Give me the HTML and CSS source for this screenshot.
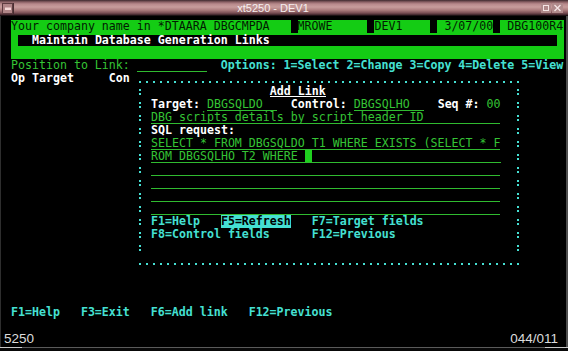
FILE: index.html
```html
<!DOCTYPE html>
<html>
<head>
<meta charset="utf-8">
<title>xt5250 - DEV1</title>
<link rel="stylesheet" href="styles.css">
</head>
<body>
<div class="win">
  <div class="titlebar">
    <svg class="tb-menu" width="12" height="11" viewBox="0 0 12 11"><rect x="0.5" y="0.5" width="10" height="10" fill="#b08587" stroke="#5e3c40"/><rect x="3" y="4.5" width="6" height="2.5" fill="#f4d8d6"/><rect x="11" y="0" width="1" height="11" fill="#4a2e32"/></svg>
    <span class="tb-title">xt5250 - DEV1</span>
    <svg class="tb-max" width="10" height="10" viewBox="0 0 10 10"><rect x="0" y="0" width="10" height="10" fill="#b08a8b"/><rect x="2.5" y="2.5" width="5" height="5" fill="none" stroke="#f4e4e4"/></svg>
    <svg class="tb-close" width="11" height="10" viewBox="0 0 11 10"><rect x="0" y="0" width="11" height="10" fill="#b08a8b"/><path d="M2.5 2 L8.5 8 M8.5 2 L2.5 8" stroke="#f4e4e4" stroke-width="1.3"/></svg>
  </div>
  <div class="body">
    <div class="screen">
      <div class="hdr">
        <div class="hrow"><span class="rvt">Your company name in *DTAARA DBGCMPDA   </span><span class="gap"></span><span class="rvt">MROWE     </span><span class="gap"></span><span class="rvt">DEV1    </span><span class="gap"></span><span class="rvt"> 3/07/00</span><span class="gap"></span><span class="rvt"> DBG100R4</span></div>
        <div class="hbar"><span class="w">  Maintain Database Generation Links</span></div>
        <div class="hrow"></div>
      </div>
      <div class="row"> <span class="g">Position to Link:</span> <span class="fld g">          </span>  <span class="c">Options: 1=Select 2=Change 3=Copy 4=Delete 5=View</span></div>
      <div class="row"> <span class="w">Op Target</span>     <span class="w">Con</span></div>
      <div class="row"></div>
      <div class="row"></div>
      <div class="row"></div>
      <div class="row"></div>
      <div class="row"></div>
      <div class="row"></div>
      <div class="row"></div>
      <div class="row"></div>
      <div class="row"></div>
      <div class="row"></div>
      <div class="row"></div>
      <div class="row"></div>
      <div class="row"></div>
      <div class="row"></div>
      <div class="row"></div>
      <div class="row"></div>
      <div class="row"></div>
      <div class="row"> <span class="c">F1=Help   F3=Exit   F6=Add link   F12=Previous</span></div>
      <div class="row"></div>

      <div class="popup">
        <div class="pedge"></div>
        <div class="pbody">
          <div class="prow">                  <span class="w u">Add Link</span></div>
          <div class="prow"> <span class="w">Target:</span> <span class="fld g">DBGSQLDO  </span>  <span class="w">Control:</span> <span class="fld g">DBGSQLHO  </span>  <span class="w">Seq #:</span> <span class="g">00</span></div>
          <div class="prow"> <span class="fld g">DBG scripts details by script header ID           </span></div>
          <div class="prow"> <span class="w">SQL request:</span></div>
          <div class="prow"> <span class="fld g">SELECT * FROM DBGSQLDO T1 WHERE EXISTS (SELECT * F</span></div>
          <div class="prow"> <span class="fld g">ROM DBGSQLHO T2 WHERE <span class="cur"></span>                           </span></div>
          <div class="prow"> <span class="fld g">                                                  </span></div>
          <div class="prow"> <span class="fld g">                                                  </span></div>
          <div class="prow"> <span class="fld g">                                                  </span></div>
          <div class="prow"> <span class="fld g">                                                  </span></div>
          <div class="prow"> <span class="c">F1=Help</span>   <span class="hl">F5=Refresh</span>   <span class="c">F7=Target fields</span></div>
          <div class="prow"> <span class="c">F8=Control fields</span>      <span class="c">F12=Previous</span></div>
          <div class="prow"></div>
        </div>
        <div class="pedge"></div>
      </div>
    </div>
    <div class="status"><span>5250</span><span>044/011</span></div>
  </div>
  <div class="bottom"></div>
</div>
</body>
</html>
```

FILE: styles.css
```css
* { box-sizing: border-box; }
html, body { margin: 0; padding: 0; background: #000; }

.win {
  width: 568px;
  height: 351px;
  background: #000;
  display: flex;
  flex-direction: column;
  overflow: hidden;
}

/* title bar */
.titlebar {
  height: 16px;
  flex: none;
  display: flex;
  align-items: center;
  background: linear-gradient(to bottom, #3d2a2e 0px, #8a6064 2px, #b88a8c 4px, #c79d9c 7px, #ad7d7e 10px, #7a4e54 13px, #3a2228 15px, #000 16px);
}
.tb-menu { margin-left: 2px; flex: none; display: block; }
.tb-title {
  flex: 1;
  text-align: center;
  padding-right: 9px;
  font-family: "Liberation Sans", Arial, sans-serif;
  font-size: 11px;
  line-height: 15px;
  color: #f6eeee;
  white-space: pre;
}
.tb-max { flex: none; display: block; margin-right: 1px; }
.tb-close { flex: none; display: block; margin-right: 5px; }

/* terminal body */
.body {
  flex: none;
  height: 331px;
  border-left: 1px solid #2e2e2e;
  border-right: 2px solid #4e4e4e;
  padding: 4px 0 0 3px;
}

.screen {
  position: relative;
  width: 560px;
  height: 312px;
  font-family: "DejaVu Sans Mono", "Liberation Mono", monospace;
  font-size: 11.627px;
  line-height: 13px;
  color: #35c435;
}

.row, .prow, .hrow {
  height: 13px;
  white-space: pre;
}

/* header (reverse image) */
.hdr {
  margin-left: 7px;
  width: 553px;
  height: 39px;
  background: #14cc14;
}
.rvt { color: #021a02; }
.gap {
  display: inline-block;
  width: 7px;
  height: 13px;
  vertical-align: top;
  background: #000;
}
.hbar {
  margin: 2px 0 0 7px;
  width: 539px;
  height: 11px;
  line-height: 11px;
  white-space: pre;
  background: #000;
}

/* colours */
.g { color: #35c435; }
.w { color: #ffffff; font-weight: bold; }
.c { color: #45e0d3; font-weight: bold; }
.hl {
  display: inline-block;
  height: 13px;
  vertical-align: top;
  background: #45e0d3;
  color: #000;
  font-weight: bold;
}

/* input fields with underline */
.fld {
  display: inline-block;
  height: 13px;
  vertical-align: top;
  background: linear-gradient(#30bb30, #30bb30) 0 12px / 100% 1px no-repeat;
}
.u {
  display: inline-block;
  height: 13px;
  vertical-align: top;
  background: linear-gradient(#ffffff, #ffffff) 0 11px / 100% 1px no-repeat;
}
.cur {
  display: inline-block;
  width: 7px;
  height: 12px;
  vertical-align: top;
  background: #1fd01f;
}

/* popup window overlaying the list */
.popup {
  position: absolute;
  left: 133px;
  top: 52px;
  width: 385px;
  height: 195px;
  background: #000;
}
.pedge {
  height: 13px;
  background: linear-gradient(to right, #45e0d3 2px, transparent 2px) 2px 9px / 7px 2px repeat-x;
}
.pbody {
  height: 169px;
  padding-left: 7px;
  background:
    linear-gradient(to bottom, transparent 4px, #45e0d3 4px 6px, transparent 6px 8px, #45e0d3 8px 10px, transparent 10px) 2px 0 / 2px 13px repeat-y,
    linear-gradient(to bottom, transparent 4px, #45e0d3 4px 6px, transparent 6px 8px, #45e0d3 8px 10px, transparent 10px) 380px 0 / 2px 13px repeat-y;
}

/* status line */
.status {
  height: 15px;
  display: flex;
  justify-content: space-between;
  padding: 0 8px 0 0;
  font-family: "Liberation Sans", Arial, sans-serif;
  font-size: 13.5px;
  line-height: 13px;
  color: #dcdcdc;
}

.bottom {
  flex: none;
  height: 4px;
  background:
    linear-gradient(to right, #c8c8c8 0 22px, #5a5a5a 22px 545px, #c8c8c8 545px) top / 100% 1px no-repeat,
    #080808;
}
```
